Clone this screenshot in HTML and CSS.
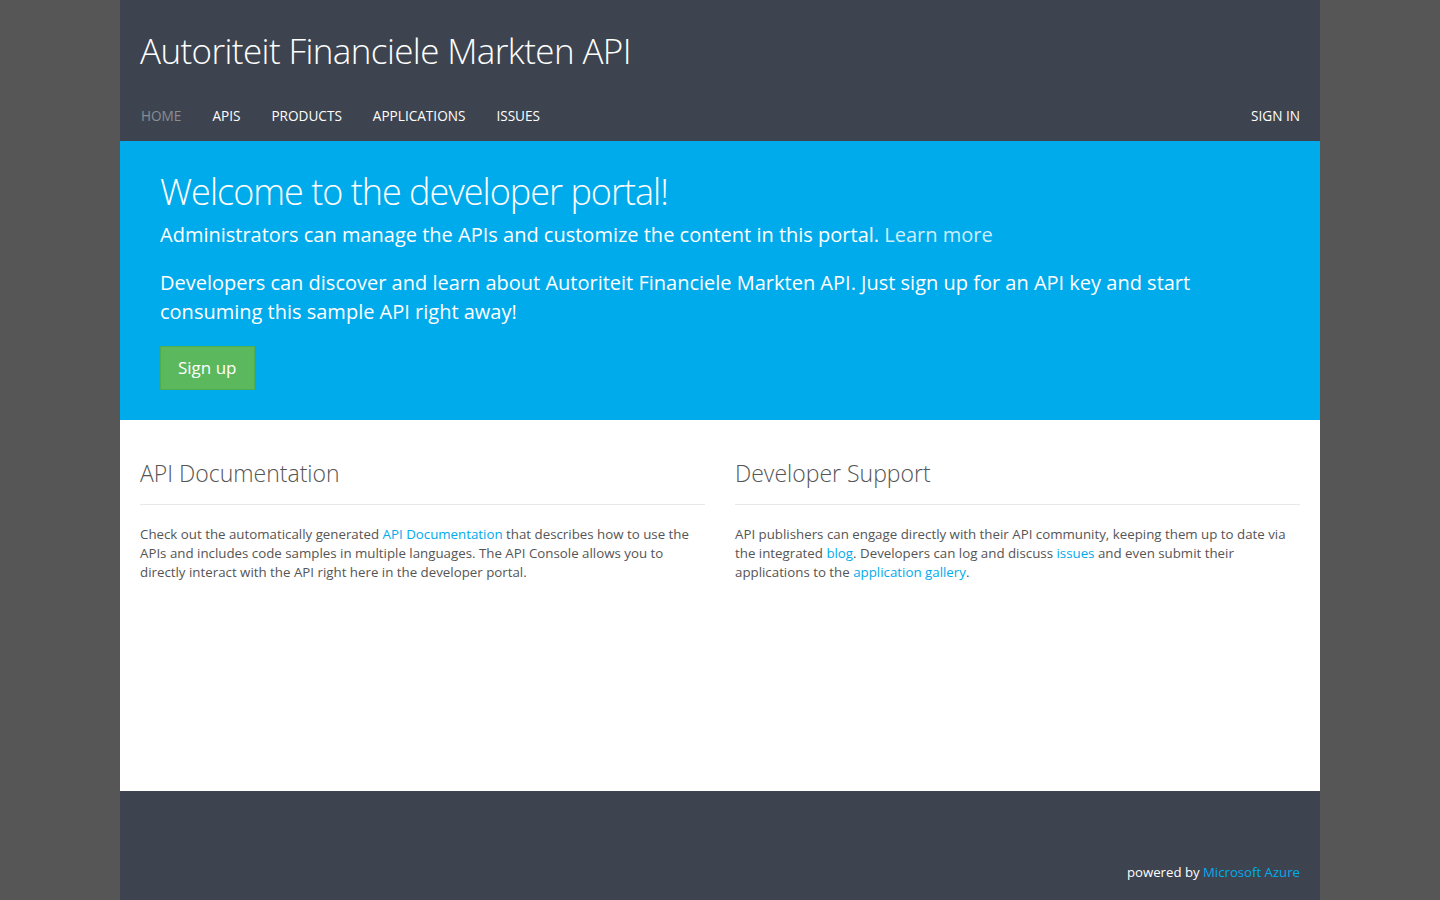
FILE: index.html
```html
<!DOCTYPE html>
<html lang="en">
<head>
<meta charset="utf-8">
<title>Autoriteit Financiele Markten API</title>
<link rel="stylesheet" href="styles.css">
</head>
<body>
<div class="page">
  <header class="header">
    <div class="brand">Autoriteit Financiele Markten API</div>
    <nav class="nav">
      <ul class="nav-left">
        <li><a class="active" href="#">HOME</a></li>
        <li><a href="#">APIS</a></li>
        <li><a href="#">PRODUCTS</a></li>
        <li><a href="#">APPLICATIONS</a></li>
        <li><a href="#">ISSUES</a></li>
      </ul>
      <ul class="nav-right">
        <li><a href="#">SIGN IN</a></li>
      </ul>
    </nav>
  </header>
  <section class="hero">
    <h1 class="hero-title">Welcome to the developer portal!</h1>
    <p class="lead lead-1">Administrators can manage the APIs and customize the content in this portal. <a class="lead-link" href="#">Learn more</a></p>
    <p class="lead lead-2">Developers can discover and learn about Autoriteit Financiele Markten API. Just sign up for an API key and start consuming this sample API right away!</p>
    <a class="btn-signup" href="#">Sign up</a>
  </section>
  <main class="content">
    <div class="col">
      <h2 class="col-title">API Documentation</h2>
      <hr class="rule">
      <p class="text">Check out the automatically generated <a href="#">API Documentation</a> that describes how to use the APIs and includes code samples in multiple languages. The API Console allows you to directly interact with the API right here in the developer portal.</p>
    </div>
    <div class="col">
      <h2 class="col-title">Developer Support</h2>
      <hr class="rule">
      <p class="text">API publishers can engage directly with their API community, keeping them up to date via the integrated <a href="#">blog</a>. Developers can log and discuss <a href="#">issues</a> and even submit their applications to the <a href="#">application gallery</a>.</p>
    </div>
  </main>
  <footer class="footer">
    <p class="powered">powered by <a href="#">Microsoft Azure</a></p>
  </footer>
</div>
</body>
</html>
```
FILE: styles.css
```css
* { box-sizing: border-box; }
html, body { margin: 0; padding: 0; }
body {
  background: #565656;
  font-family: "Open Sans", "Noto Sans", sans-serif;
  color: #555;
}
a { text-decoration: none; }
.page {
  width: 1200px;
  margin: 0 auto;
  display: flex;
  flex-direction: column;
  min-height: 900px;
}
.header {
  background: #3d4450;
  padding: 0 20px;
}
.brand {
  color: #fff;
  font-size: 35px;
  font-weight: 300;
  line-height: 40px;
  padding-top: 31px;
  height: 100px;
  letter-spacing: -0.6px;
}
.nav {
  display: flex;
  justify-content: space-between;
  height: 41px;
}
.nav ul {
  list-style: none;
  margin: 0;
  padding: 0;
  display: flex;
}
.nav-left li { margin-right: 30px; }
.nav a {
  color: #fff;
  font-size: 13.6px;
  line-height: 32px;
  display: block;
}
.nav-left a { padding-left: 1px; }
.nav a.active { color: #8a8e94; }

.hero {
  background: #00abec;
  color: #fff;
  padding: 28px 40px 30px;
}
.hero-title {
  margin: 0;
  font-size: 36px;
  font-weight: 300;
  line-height: 46px;
  letter-spacing: -1px;
}
.lead {
  margin: 0;
  font-size: 20px;
  line-height: 29px;
  font-weight: 400;
}
.lead-1 { margin-top: 5px; }
.lead-2 { margin-top: 19px; }
.lead-link { color: #cdeefb; }
.btn-signup {
  display: inline-block;
  margin-top: 20px;
  background: #5cb85c;
  border: 1px solid #4cae4c;
  color: #fff;
  font-size: 17px;
  line-height: 24px;
  padding: 9px 17px 9px;
}

.content {
  background: #fff;
  display: flex;
  gap: 30px;
  padding: 38px 20px 0;
  height: 371px;
}
.col { flex: 1; }
.col-title {
  margin: 0;
  font-size: 23px;
  font-weight: 300;
  line-height: 30px;
  color: #555;
}
.rule {
  border: 0;
  border-top: 1px solid #e8e8e8;
  margin: 16px 0 0;
}
.text {
  margin: 20px 0 0;
  font-size: 13.3px;
  line-height: 19px;
  color: #555;
}
.text a { color: #00abec; }

.footer {
  background: #3d4450;
  flex: 1;
  display: flex;
  justify-content: flex-end;
  align-items: flex-start;
  padding: 0 20px;
}
.powered {
  margin: 71px 0 0;
  font-size: 13.2px;
  line-height: 20px;
  color: #fff;
}
.powered a { color: #00abec; }
```
